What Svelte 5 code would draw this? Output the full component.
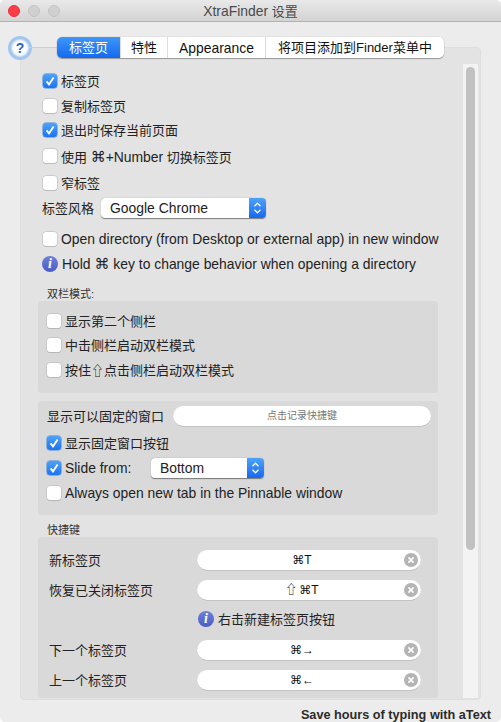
<script lang="ts">
	const shortcuts = [
		{ label: '新标签页', shift: false, keys: '⌘T', top: 'mt0' },
		{ label: '恢复已关闭标签页', shift: true, keys: '⌘T', top: 'mt6' }
	];
	const shortcutsAfter = [
		{ label: '下一个标签页', shift: false, keys: '⌘→', top: 'mt7' },
		{ label: '上一个标签页', shift: false, keys: '⌘←', top: 'mt6' }
	];
</script>

{#snippet checkbox(checked: boolean)}
	<span class="check" class:on={checked}>
		{#if checked}
			<svg width="14" height="14" viewBox="0 0 14 14">
				<path d="M3.6 7.4 L6 10.4 L10.6 3.4" fill="none" stroke="#fff" stroke-width="1.9" />
			</svg>
		{/if}
	</span>
{/snippet}

{#snippet info()}
	<span class="info"><i>i</i></span>
{/snippet}

{#snippet select(text: string, cls: string)}
	<div class="select {cls}">
		<span class="select-text">{text}</span>
		<span class="select-cap">
			<svg width="9" height="14" viewBox="0 0 9 14">
				<path d="M1.5 5.2 L4.5 2.2 L7.5 5.2 M1.5 8.8 L4.5 11.8 L7.5 8.8" fill="none" stroke="#fff" stroke-width="1.3" />
			</svg>
		</span>
	</div>
{/snippet}

{#snippet shortcut(item: { label: string; shift: boolean; keys: string; top: string })}
	<div class="row {item.top}">
		<span class="short-label">{item.label}</span>
		<div class="pill short-pill">
			<span class="keys">{#if item.shift}<span class="shift">⇧</span>{/if}{item.keys}</span>
			<span class="clear">
				<svg width="14" height="14" viewBox="0 0 14 14">
					<circle cx="7" cy="7" r="7" fill="#b4b4b4" />
					<path d="M4.4 4.4 L9.6 9.6 M9.6 4.4 L4.4 9.6" stroke="#fff" stroke-width="1.7" />
				</svg>
			</span>
		</div>
	</div>
{/snippet}

<div class="window">
	<header class="titlebar">
		<div class="lights">
			<span class="light red"></span>
			<span class="light"></span>
			<span class="light"></span>
		</div>
		<span class="title"><span class="latin">XtraFinder</span> 设置</span>
	</header>

	<main class="body">
		<div class="top">
			<span class="help">?</span>
			<span class="help-line"></span>
			<nav class="tabs">
				<span class="tab active t1">标签页</span>
				<span class="tab t2">特性</span>
				<span class="tab t3 latin">Appearance</span>
				<span class="tab t4">将项目添加到Finder菜单中</span>
			</nav>
		</div>

		<section class="box">
			<div class="content">
				<div class="plain">
					<div class="row">{@render checkbox(true)}<span>标签页</span></div>
					<div class="row mt1">{@render checkbox(false)}<span>复制标签页</span></div>
					<div class="row">{@render checkbox(true)}<span>退出时保存当前页面</span></div>
					<div class="row mt2">{@render checkbox(false)}<span>使用 <span class="sym">⌘</span><span class="latin">+Number</span> 切换标签页</span></div>
					<div class="row mt3">{@render checkbox(false)}<span>窄标签</span></div>
					<div class="row mt1">
						<span class="style-label">标签风格</span>
						{@render select('Google Chrome', 'wide')}
					</div>
					<div class="row mt7">{@render checkbox(false)}<span class="latin">Open directory (from Desktop or external app) in new window</span></div>
					<div class="row mt1 info-row">{@render info()}<span class="latin">Hold <span class="sym">⌘</span> key to change behavior when opening a directory</span></div>
				</div>

				<h4 class="heading first">双栏模式:</h4>
				<div class="group dual">
					<div class="row">{@render checkbox(false)}<span>显示第二个侧栏</span></div>
					<div class="row">{@render checkbox(false)}<span>中击侧栏启动双栏模式</span></div>
					<div class="row mt1">{@render checkbox(false)}<span>按住⇧点击侧栏启动双栏模式</span></div>
				</div>

				<div class="group pinned">
					<div class="row">
						<span class="pin-label">显示可以固定的窗口</span>
						<div class="pill pin-pill">点击记录快捷键</div>
					</div>
					<div class="row mt3">{@render checkbox(true)}<span>显示固定窗口按钮</span></div>
					<div class="row mt1">
						{@render checkbox(true)}<span class="slide-label latin">Slide from:</span>
						{@render select('Bottom', 'narrow')}
					</div>
					<div class="row mt1">{@render checkbox(false)}<span class="latin">Always open new tab in the Pinnable window</span></div>
				</div>

				<h4 class="heading">快捷键</h4>
				<div class="group keys-group">
					{#each shortcuts as item}
						{@render shortcut(item)}
					{/each}
					<div class="row mt5 short-info">{@render info()}<span>右击新建标签页按钮</span></div>
					{#each shortcutsAfter as item}
						{@render shortcut(item)}
					{/each}
				</div>
			</div>

			<div class="track"><span class="thumb"></span></div>
		</section>
	</main>

	<footer class="footer">Save hours of typing with aText</footer>
</div>

<style>
	:global(body) {
		background: #fff;
	}

	.window {
		width: 501px;
		height: 722px;
		display: flex;
		flex-direction: column;
		background: #ececec;
		border-radius: 5px;
		overflow: hidden;
		font-family: 'Liberation Sans', 'Noto Sans CJK SC', sans-serif;
		font-size: 13px;
		line-height: 16px;
		color: #222;
	}

	.latin {
		font-size: 13.9px;
	}

	.sym {
		font-family: 'DejaVu Sans', sans-serif;
		font-size: 15px;
		line-height: 0;
	}

	.titlebar {
		height: 22px;
		flex: none;
		box-sizing: border-box;
		display: flex;
		align-items: center;
		justify-content: center;
		position: relative;
		background: linear-gradient(#e9e9e9, #d3d3d3);
		border-bottom: 1px solid #b2b2b2;
	}

	.lights {
		position: absolute;
		left: 8px;
		top: 5px;
		display: flex;
		gap: 8px;
	}

	.light {
		width: 12px;
		height: 12px;
		border-radius: 50%;
		background: #d0d0d0;
		border: 1px solid #c2c2c2;
		box-sizing: border-box;
	}

	.light.red {
		background: #fc3d48;
		border-color: #e62f3a;
	}

	.title {
		padding-top: 2px;
		color: #4a4a4a;
	}

	.body {
		flex: 1;
		min-height: 0;
		padding: 14px 20px 0;
	}

	.top {
		display: flex;
		align-items: center;
		height: 23px;
		margin-left: -12px;
		position: relative;
		z-index: 1;
	}

	.help {
		width: 18px;
		height: 18px;
		flex: none;
		margin-left: 3px;
		border-radius: 50%;
		background: #fff;
		box-shadow: 0 0 0 3px #a3c6ee, inset 0 0 3px #7fb2ee;
		color: #2f62c8;
		font-weight: bold;
		font-size: 14px;
		line-height: 18px;
		text-align: center;
	}

	.help-line {
		width: 28px;
		height: 1px;
		background: #cfcfcf;
	}

	.tabs {
		display: flex;
		height: 21px;
		background: #fff;
		border-radius: 5px;
		box-shadow: 0 1px 1px rgba(0, 0, 0, 0.3), 0 0 0 0.5px rgba(0, 0, 0, 0.08);
	}

	.tab {
		display: flex;
		align-items: center;
		justify-content: center;
		box-sizing: border-box;
		border-left: 1px solid #dcdcdc;
		color: #111;
	}

	.tab.active {
		border: none;
		border-radius: 5px 0 0 5px;
		color: #fff;
		background: linear-gradient(#3e97f8, #1469ef);
	}

	.t1 {
		width: 63px;
	}

	.t2 {
		width: 47px;
	}

	.t3 {
		width: 98px;
	}

	.t4 {
		width: 179px;
	}

	.box {
		height: 653px;
		margin-top: -12px;
		display: flex;
		background: #e3e3e3;
		border: 1px solid #dedede;
		box-sizing: border-box;
		border-radius: 4px;
		overflow: hidden;
	}

	.content {
		width: 442px;
		flex: none;
		padding: 21px 0 0 17px;
		box-sizing: border-box;
	}

	.plain {
		padding-left: 5px;
	}

	.row {
		height: 24px;
		display: flex;
		align-items: center;
		white-space: nowrap;
	}

	/* CJK labels sit a pixel lower than the latin ones */
	.row > span:not(.latin, .check, .info) {
		padding-top: 2px;
	}

	.mt0 {
		margin-top: 0;
	}

	.mt1 {
		margin-top: 1px;
	}

	.mt2 {
		margin-top: 2px;
	}

	.mt3 {
		margin-top: 3px;
	}

	.mt5 {
		margin-top: 5px;
	}

	.mt6 {
		margin-top: 6px;
	}

	.mt7 {
		margin-top: 7px;
	}

	.check {
		width: 14px;
		height: 14px;
		flex: none;
		margin-right: 4px;
		box-sizing: border-box;
		border-radius: 3px;
		background: #fff;
		box-shadow: 0 0 0 0.5px #b5b5b5, 0 1px 0 rgba(0, 0, 0, 0.15);
	}

	.check.on {
		background: linear-gradient(#4fa2f8, #1c74f0);
		box-shadow: 0 0 0 0.5px #3f86e2;
	}

	.check svg {
		display: block;
	}

	.info {
		width: 16px;
		height: 16px;
		flex: none;
		margin-right: 4px;
		border-radius: 50%;
		background: linear-gradient(#6f7fdc, #4a5cc4);
		display: flex;
		align-items: center;
		justify-content: center;
		color: #fff;
		font-family: 'Liberation Serif', serif;
		font-weight: bold;
		font-size: 14px;
	}

	.info-row {
		margin-left: -1px;
	}

	.style-label {
		margin-left: -1px;
		margin-right: 7px;
	}

	.select {
		height: 20px;
		display: flex;
		box-sizing: border-box;
		background: #fff;
		border-radius: 4px;
		box-shadow: 0 0.5px 1px rgba(0, 0, 0, 0.45);
		overflow: hidden;
	}

	.select.wide {
		width: 165px;
	}

	.select.narrow {
		width: 113px;
	}

	.select-text {
		flex: 1;
		padding-left: 9px;
		font-size: 13.9px;
		line-height: 20px;
		color: #222;
	}

	.select-cap {
		width: 17px;
		display: flex;
		align-items: center;
		justify-content: center;
		background: linear-gradient(#4fa2f8, #1469ef);
	}

	.heading {
		margin: 8px 0 0 9px;
		height: 14px;
		font-weight: normal;
		font-size: 11px;
		line-height: 14px;
		color: #333;
	}

	.heading.first {
		margin-top: 11px;
	}

	.group {
		width: 400px;
		box-sizing: border-box;
		padding-left: 9px;
		background: #d9d9d9;
		border-radius: 4px;
	}

	.dual {
		padding-top: 8px;
		padding-bottom: 11px;
	}

	.pinned {
		margin-top: 8px;
		padding-top: 3px;
		padding-bottom: 10px;
	}

	.keys-group {
		padding-top: 11px;
		padding-bottom: 6px;
	}

	.pill {
		height: 20px;
		display: flex;
		align-items: center;
		justify-content: center;
		background: #fff;
		border-radius: 10px;
		box-shadow: 0 0.5px 0.5px rgba(0, 0, 0, 0.2);
		font-size: 10px;
	}

	.pin-label {
		width: 126px;
	}

	.pin-pill {
		width: 258px;
		color: #777;
	}

	.slide-label {
		width: 86px;
	}

	.short-label {
		width: 148px;
		margin-left: 2px;
	}

	.short-pill {
		width: 224px;
		padding-right: 14px;
		box-sizing: border-box;
		position: relative;
	}

	.keys {
		color: #111;
		font-family: 'Liberation Sans', 'DejaVu Sans', sans-serif;
		font-size: 12px;
	}

	.shift {
		margin-right: 2px;
		font-family: 'Noto Sans CJK SC', sans-serif;
		line-height: 0;
	}

	.clear {
		position: absolute;
		right: 3px;
		top: 3px;
		height: 14px;
	}

	.short-info {
		padding-left: 151px;
	}

	.track {
		width: 15px;
		height: 634px;
		margin-top: 16px;
		flex: none;
		background: #f3f3f3;
		box-sizing: border-box;
		padding: 3px 3px 0;
	}

	.thumb {
		display: block;
		width: 9px;
		height: 483px;
		border-radius: 5px;
		background: #c1c1c1;
	}

	.footer {
		height: 22px;
		padding-right: 10px;
		text-align: right;
		font-weight: bold;
		font-size: 12.7px;
		line-height: 30px;
		color: #2b2b2b;
		white-space: nowrap;
	}
</style>
